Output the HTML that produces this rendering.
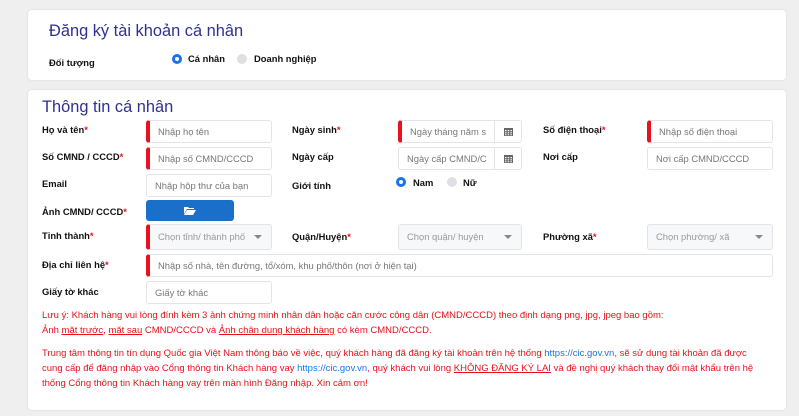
<!DOCTYPE html>
<html><head><meta charset="utf-8"><style>
*{box-sizing:border-box;margin:0;padding:0}
body{width:799px;height:416px;background:#efefef;font-family:"Liberation Sans",sans-serif;position:relative;overflow:hidden}
.card{position:absolute;left:28px;width:758px;background:#fff;border-radius:4px;box-shadow:0 0 2px rgba(0,0,0,.12)}
.a{position:absolute;white-space:nowrap}
.t{color:#2e3192;font-size:16.4px}
.lb{font-size:9.4px;font-weight:bold;color:#111}
.lb i{color:#e8111d;font-style:normal}
.in{position:absolute;height:23px;border:1px solid #e2e4e8;border-radius:3px;background:#fff;font-size:9.4px;color:#777;padding:0 8px;line-height:21px;white-space:nowrap;overflow:hidden}
.req{border-left:4px solid #e8111d}
.sel{background:#f7f8f9;color:#999}
.sel:after{content:"";position:absolute;right:9px;top:10px;border:4px solid transparent;border-top:4px solid #888}
.cal{position:absolute;right:0;top:0;width:27px;height:21px;border-left:1px solid #e2e4e8;background:#fff}
.cal svg{position:absolute;left:9px;top:6px}
.rad{position:absolute;width:10px;height:10px;border-radius:50%}
.on{border:3px solid #1a73e8;background:#fff}
.off{background:#dde0e4}
.note{position:absolute;left:42px;font-size:9.5px;color:#e8111d;line-height:15px;white-space:nowrap}
.note u{text-decoration:underline}
.note b{font-weight:normal;color:#1a73e8}
</style></head><body>
<div class="card" style="top:10px;height:70px"></div>
<div class="a t" style="left:49px;top:22px">Đăng ký tài khoản cá nhân</div>
<div class="a lb" style="left:49px;top:57px">Đối tượng</div>
<div class="rad on" style="left:172px;top:54px"></div><div class="a lb" style="left:188px;top:53px">Cá nhân</div>
<div class="rad off" style="left:237px;top:54px"></div><div class="a lb" style="left:254px;top:53px">Doanh nghiệp</div>

<div class="card" style="top:90px;height:320px"></div>
<div class="a t" style="left:42px;top:98px">Thông tin cá nhân</div>

<div class="a lb" style="left:42px;top:124px">Họ và tên<i>*</i></div>
<div class="in req" style="left:146px;top:120px;width:126px">Nhập họ tên</div>
<div class="a lb" style="left:292px;top:124px">Ngày sinh<i>*</i></div>
<div class="in req" style="left:398px;top:120px;width:124px">Ngày tháng năm s<span class="cal"><svg width="9" height="9" viewBox="0 0 9 9"><path d="M0 1h9v8H0z" fill="#666"/><path d="M1 3h1.5v1.2H1zM3.7 3h1.5v1.2H3.7zM6.4 3h1.5v1.2H6.4zM1 5.2h1.5v1.2H1zM3.7 5.2h1.5v1.2H3.7zM6.4 5.2h1.5v1.2H6.4zM1 7.3h1.5v1H1zM3.7 7.3h1.5v1H3.7zM6.4 7.3h1.5v1H6.4z" fill="#fff"/></svg></span></div>
<div class="a lb" style="left:543px;top:124px">Số điện thoại<i>*</i></div>
<div class="in req" style="left:647px;top:120px;width:126px">Nhập số điện thoại</div>

<div class="a lb" style="left:42px;top:151px">Số CMND / CCCD<i>*</i></div>
<div class="in req" style="left:146px;top:147px;width:126px">Nhập số CMND/CCCD</div>
<div class="a lb" style="left:292px;top:151px">Ngày cấp</div>
<div class="in" style="left:398px;top:147px;width:124px">Ngày cấp CMND/C<span class="cal"><svg width="9" height="9" viewBox="0 0 9 9"><path d="M0 1h9v8H0z" fill="#666"/><path d="M1 3h1.5v1.2H1zM3.7 3h1.5v1.2H3.7zM6.4 3h1.5v1.2H6.4zM1 5.2h1.5v1.2H1zM3.7 5.2h1.5v1.2H3.7zM6.4 5.2h1.5v1.2H6.4zM1 7.3h1.5v1H1zM3.7 7.3h1.5v1H3.7zM6.4 7.3h1.5v1H6.4z" fill="#fff"/></svg></span></div>
<div class="a lb" style="left:543px;top:151px">Nơi cấp</div>
<div class="in" style="left:647px;top:147px;width:126px">Nơi cấp CMND/CCCD</div>

<div class="a lb" style="left:42px;top:178px">Email</div>
<div class="in" style="left:146px;top:174px;width:126px">Nhập hộp thư của bạn</div>
<div class="a lb" style="left:292px;top:180px">Giới tính</div>
<div class="rad on" style="left:396px;top:177px"></div><div class="a lb" style="left:413px;top:177px">Nam</div>
<div class="rad off" style="left:447px;top:177px"></div><div class="a lb" style="left:463px;top:177px">Nữ</div>

<div class="a lb" style="left:42px;top:206px">Ảnh CMND/ CCCD<i>*</i></div>
<div class="a" style="left:146px;top:200px;width:88px;height:21px;background:#1a6fc9;border-radius:3px"><svg style="position:absolute;left:38px;top:6px" width="12" height="9" viewBox="0 0 12 9"><path d="M0 1h4l1 1h5v1H3L0 8z M3 4h9l-3 5H0z" fill="#fff"/></svg></div>

<div class="a lb" style="left:42px;top:230px">Tỉnh thành<i>*</i></div>
<div class="in req sel" style="left:146px;top:224px;width:126px;height:26px;line-height:24px">Chọn tỉnh/ thành phố</div>
<div class="a lb" style="left:292px;top:231px">Quận/Huyện<i>*</i></div>
<div class="in sel" style="left:398px;top:224px;width:124px;height:26px;line-height:24px">Chọn quận/ huyện</div>
<div class="a lb" style="left:543px;top:231px">Phường xã<i>*</i></div>
<div class="in sel" style="left:647px;top:224px;width:126px;height:26px;line-height:24px">Chọn phường/ xã</div>

<div class="a lb" style="left:42px;top:259px">Địa chỉ liên hệ<i>*</i></div>
<div class="in req" style="left:146px;top:254px;width:627px">Nhập số nhà, tên đường, tổ/xóm, khu phố/thôn (nơi ở hiện tại)</div>

<div class="a lb" style="left:42px;top:286px">Giấy tờ khác</div>
<div class="in" style="left:146px;top:281px;width:126px">Giấy tờ khác</div>

<div class="note" style="top:308px">Lưu ý: Khách hàng vui lòng đính kèm 3 ảnh chứng minh nhân dân hoặc căn cước công dân (CMND/CCCD) theo định dạng png, jpg, jpeg bao gồm:<br>Ảnh <u>mặt trước</u>, <u>mặt sau</u> CMND/CCCD và <u>Ảnh chân dung khách hàng</u> có kèm CMND/CCCD.</div>
<div class="note" style="top:346px">Trung tâm thông tin tín dụng Quốc gia Việt Nam thông báo về việc, quý khách hàng đã đăng ký tài khoản trên hệ thống <b>https://cic.gov.vn</b>, sẽ sử dụng tài khoản đã được<br>cung cấp để đăng nhập vào Cổng thông tin Khách hàng vay <b>https://cic.gov.vn</b>, quý khách vui lòng <u>KHÔNG ĐĂNG KÝ LẠI</u> và đề nghị quý khách thay đổi mật khẩu trên hệ<br>thống Cổng thông tin Khách hàng vay trên màn hình Đăng nhập. Xin cảm ơn!</div>
</body></html>
